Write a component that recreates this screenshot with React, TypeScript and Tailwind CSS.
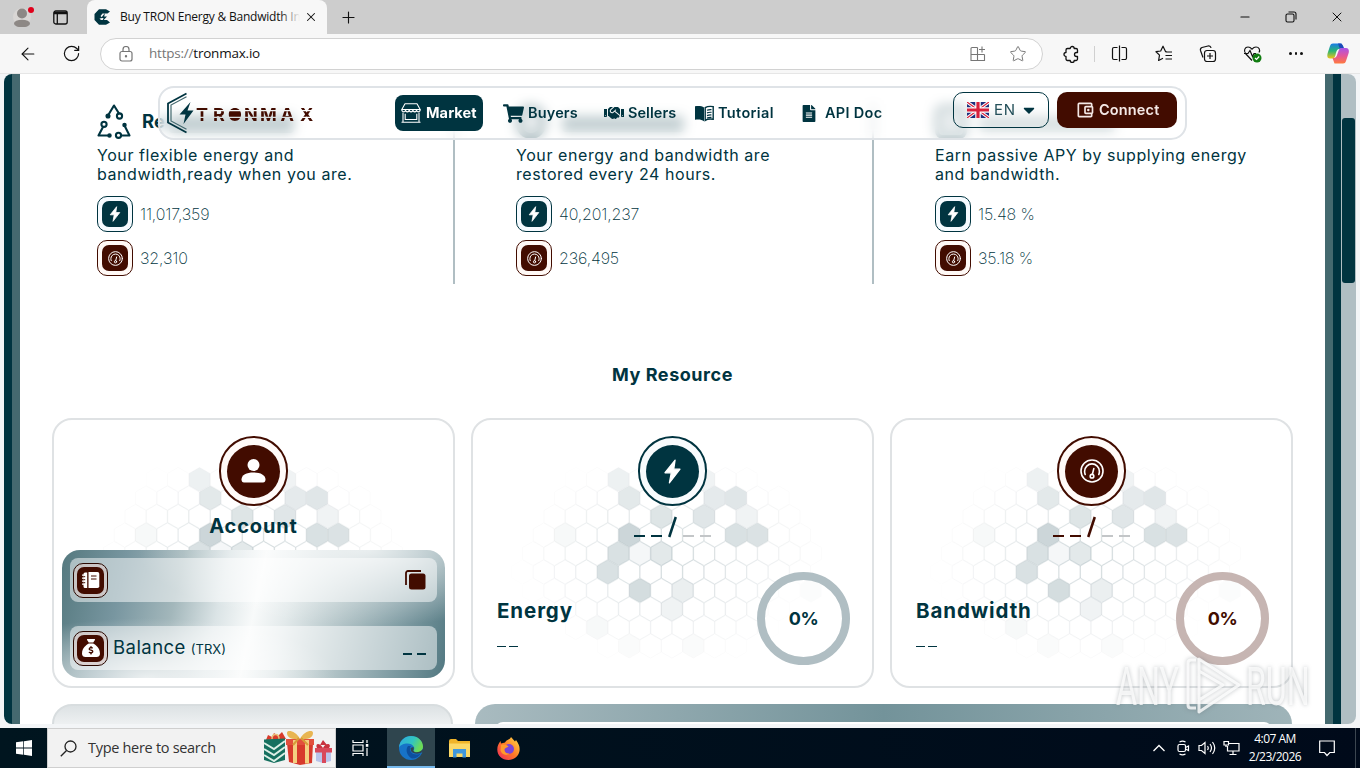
import type { ReactNode } from "react";
import { ArrowLeft, Minus, Plus, RotateCw, Star, X } from "lucide-react";
import { FaCaretDown, FaFileAlt, FaHandshake, FaShoppingCart } from "react-icons/fa";
import { FaSackDollar } from "react-icons/fa6";
import { MdOutlineAccountBalanceWallet } from "react-icons/md";

const hexFills: Record<string, number> = {
  "0-6": 0.07,
  "0-10": 0.06,
  "1-6": 0.11,
  "1-10": 0.1,
  "1-11": 0.12,
  "2-8": 0.13,
  "2-10": 0.12,
  "2-12": 0.06,
  "3-6": 0.2,
  "3-11": 0.15,
  "3-12": 0.14,
  "3-3": 0.03,
  "4-6": 0.15,
  "4-7": 0.04,
  "4-8": 0.11,
  "5-5": 0.15,
  "6-7": 0.17,
  "6-9": 0.08,
  "6-15": 0.04,
  "7-8": 0.06,
  "8-5": 0.03,
  "9-6": 0.02,
  "9-9": 0.02,
};

function HexPattern() {
  const cells: ReactNode[] = [];
  for (let row = 0; row < 10; row++) {
    for (let col = 1; col < 17; col++) {
      const cx = (row % 2 ? 27.3 : 16.5) + col * 21.7;
      const cy = 60.3 + row * 18.8;
      const d = Math.hypot((cx - 200) / 165, (cy - 140) / 112);
      const line = Math.max(0, 0.13 * (1 - d));
      const key = `${row}-${col}`;
      const points = [
        [0, -12.2],
        [10.6, -6.1],
        [10.6, 6.1],
        [0, 12.2],
        [-10.6, 6.1],
        [-10.6, -6.1],
      ]
        .map(([x, y]) => `${(cx + x).toFixed(1)},${(cy + y).toFixed(1)}`)
        .join(" ");
      cells.push(
        <polygon
          key={key}
          points={points}
          fill="#003440"
          fillOpacity={hexFills[key] ?? 0}
          stroke="#003440"
          strokeOpacity={line}
          strokeWidth="1"
        />
      );
    }
  }
  return (
    <svg className="absolute inset-0 h-full w-full" viewBox="0 0 403 270">
      {cells}
    </svg>
  );
}

function Bolt({ className }: { className: string }) {
  return (
    <svg className={className} viewBox="0 0 24 24" fill="currentColor">
      <path
        d="M14.500 1 4.800 13.200h6L9 23 19.200 9.800h-6z"
        stroke="currentColor"
        strokeWidth="1.200"
        strokeLinejoin="round"
      />
    </svg>
  );
}

function Gauge({ className }: { className: string }) {
  return (
    <svg
      className={className}
      viewBox="0 0 24 24"
      fill="none"
      stroke="currentColor"
      strokeWidth="1.600"
      strokeLinecap="round"
    >
      <circle cx="12" cy="12" r="11" />
      <path d="M5.200 15.500a7.600 7.600 0 0 1-.6-3.200 7.400 7.400 0 0 1 14.800 0 7.600 7.600 0 0 1-.6 3.200" />
      <circle cx="12" cy="17.200" r="1.800" />
      <path d="m12.400 15.200 1.400-5.600" />
    </svg>
  );
}

function Person({ className }: { className: string }) {
  return (
    <svg className={className} viewBox="0 0 24 24" fill="currentColor">
      <circle cx="12" cy="6" r="6" />
      <path d="M0 20.500c0-4.500 5-7 12-7s12 2.500 12 7c0 2-.9 3-2.500 3h-19C.9 23.500 0 22.500 0 20.500z" />
    </svg>
  );
}

function Notebook() {
  return (
    <svg className="h-[18px] w-[18px]" viewBox="0 0 18 18">
      <path d="M3 1.500h2.200v15.500H3a1.500 1.500 0 0 1-1.500-1.500v-12.500A1.500 1.500 0 0 1 3 1.500z" fill="#fff" />
      <path d="M6.500 1h9A1.800 1.800 0 0 1 17.300 2.800v12.400a1.800 1.800 0 0 1-1.800 1.800h-9z" fill="#fff" />
      <path d="M0 4.200h3.500M0 7.200h3.500M0 10.200h3.500M0 13.200h3.500" stroke="#fff" strokeWidth="1.300" />
      <path d="M1.500 5.700h1.700M1.500 8.700h1.700M1.500 11.700h1.700M9 5h5.500M9 8h5.500" stroke="#420c00" strokeWidth="1" />
    </svg>
  );
}

function Store() {
  return (
    <svg
      className="h-5 w-5"
      viewBox="0 0 20 20"
      fill="none"
      stroke="currentColor"
      strokeWidth="1.100"
      strokeLinejoin="round"
    >
      <path d="M4 .8h12l3.200 5.700H.8z" />
      <path d="M.8 6.500c0 3 3.700 3 3.700.3 0 2.700 3.700 2.700 3.700 0 0 2.700 3.700 2.700 3.700 0 0 2.700 3.700 2.700 3.700 0 0 2.700 3.600 2.700 3.600-.3" />
      <path d="M2 9.500v9.700h16V9.500M4.200 10.800v5.700h11.600v-5.700M.5 19.200h19" />
    </svg>
  );
}

function OpenBook() {
  return (
    <svg className="h-[17px] w-[19px]" viewBox="0 0 19 17">
      <path d="M9 2.400C6.700.8 3.600.6 0 1.200v13.600c3.600-.6 6.700-.3 9 1.400z" fill="#003440" />
      <path
        d="M10.200 2.700c2-1.300 4.800-1.600 8-1.100v12.700c-3.200-.5-6-.2-8 1.100z"
        fill="none"
        stroke="#003440"
        strokeWidth="1.400"
      />
      <path
        d="M12 5.200q2-.8 4.500-.6M12 7.900q2-.8 4.500-.6M12 10.600q2-.8 4.500-.6M12 13q2-.8 4.500-.6"
        fill="none"
        stroke="#003440"
        strokeWidth="1.200"
      />
    </svg>
  );
}

function RecycleNodes() {
  return (
    <svg
      className="h-[35px] w-[34px] shrink-0"
      viewBox="0 0 34 35"
      fill="none"
      stroke="#003440"
      strokeWidth="2.100"
      strokeLinecap="round"
      strokeLinejoin="round"
    >
      <path d="M11 11.500 17 1.500l5 8" />
      <circle cx="11" cy="12" r="1.500" fill="#003440" />
      <circle cx="22.500" cy="12" r="2.600" />
      <path d="M6 23 1.500 31.500H12" />
      <circle cx="7" cy="20.300" r="2.600" />
      <circle cx="12.500" cy="31.500" r="1.200" fill="#003440" />
      <path d="M28 22.500 32.500 31.500H24.500" />
      <circle cx="27.500" cy="21" r="1.200" fill="#003440" />
      <circle cx="21.500" cy="31.300" r="2.600" />
    </svg>
  );
}

function BrandLogo() {
  return (
    <svg className="h-[42px] w-[150px]" viewBox="0 0 150 42">
      <defs>
        <mask id="slices">
          <path d="M0 0h150v42H0z" fill="#fff" />
          <path d="M29 18.700h121M29 25.300h121" stroke="#000" strokeWidth="1.300" />
        </mask>
      </defs>
      <path d="M20.500 1.500 2 11.500v19l18.500 10" fill="none" stroke="#003440" strokeWidth="1.800" />
      <path d="M20.500 4.800 5 13v16l15.500 8.300" fill="none" stroke="#44696f" strokeWidth="1.200" />
      <path d="M24.500 10 13.500 22.500h6L17.500 32 27.500 18.500h-6z" fill="#003440" />
      <g mask="url(#slices)" fill="#420c00">
        <text
          x="30 47 62 78 94 114.500 134"
          y="28.500"
          fontFamily="Inter, sans-serif"
          fontWeight="700"
          fontSize="18"
        >
          TRONMAX
        </text>
        <circle cx="68.800" cy="22" r="5.500" />
      </g>
    </svg>
  );
}

function UkFlag() {
  return (
    <svg className="h-4 w-[22px]" viewBox="0 0 22 16">
      <path d="M0 0h22v16H0z" fill="#1d2f7c" />
      <path d="m0 0 22 16M22 0 0 16" stroke="#fff" strokeWidth="3.200" />
      <path d="m0 0 22 16M22 0 0 16" stroke="#d8213c" strokeWidth="1.200" />
      <path d="M11 0v16M0 8h22" stroke="#fff" strokeWidth="5.500" />
      <path d="M11 0v16M0 8h22" stroke="#d8213c" strokeWidth="3.200" />
    </svg>
  );
}

function TabStrip() {
  return (
    <div className="flex h-[34px] shrink-0 items-center bg-[#cdcdcd] text-[#111]">
      <svg className="ml-[13px] h-5 w-[22px]" viewBox="0 0 22 20">
        <circle cx="9" cy="10" r="9" fill="#d9d6d4" />
        <circle cx="9" cy="6.500" r="5" fill="#8d8885" />
        <ellipse cx="9" cy="16.500" rx="8" ry="3.800" fill="#8d8885" />
        <circle cx="18" cy="3" r="3" fill="#e0001b" />
      </svg>
      <svg className="ml-[18px] h-[15px] w-[15px]" viewBox="0 0 15 15" fill="none" stroke="#111" strokeWidth="1.300">
        <rect x=".8" y="1" width="13.400" height="13" rx="2" />
        <path d="M1 3h13" strokeWidth="2.500" />
        <path d="M4.300 4v10" />
      </svg>
      <div className="ml-[19px] flex h-full w-[240px] items-center rounded-t-lg bg-[#f7f7f7] pl-[7px]">
        <svg className="h-4 w-[17px]" viewBox="0 0 17 16">
          <path d="M16 2.500 12 .3H5L.5 5v6L5 15.700h7l4-2.200-3-2.500H7L5.500 9.500l3-.5-2-2 2-2.500h5z" fill="#003440" />
          <path d="M11 4 7 9h2.500L8.300 12.500 13 7.500h-2.800z" fill="#003440" />
        </svg>
        <div className="relative ml-[9px] w-[180px] overflow-hidden font-['Open_Sans'] text-xs tracking-[-0.22px] whitespace-nowrap">
          Buy TRON Energy &amp; Bandwidth In
          <div className="absolute inset-y-0 right-0 w-5 bg-linear-to-r from-transparent to-[#f7f7f7]" />
        </div>
        <X className="ml-1 h-3.5 w-3.5" strokeWidth={1.8} />
      </div>
      <Plus className="ml-3 h-[19px] w-[19px]" strokeWidth={1.4} />
      <div className="flex-1" />
      <Minus className="h-3.5 w-3.5" strokeWidth={1.8} />
      <svg className="ml-[33px] h-3 w-3" viewBox="0 0 12 12" fill="none" stroke="#111" strokeWidth="1.100">
        <rect x="1" y="3" width="8" height="8" rx="1.500" />
        <path d="M3.500 1h5.500a2 2 0 0 1 2 2v5.500" />
      </svg>
      <X className="mr-[15px] ml-8 h-4 w-4" strokeWidth={1.5} />
    </div>
  );
}

function AddressBar() {
  return (
    <div className="flex h-10 shrink-0 items-center border-b border-[#e6e6e6] bg-[#f7f7f7] text-[#111]">
      <ArrowLeft className="ml-[18px] h-5 w-5" strokeWidth={1.3} />
      <RotateCw className="ml-6 h-[19px] w-[19px]" strokeWidth={1.5} />
      <div className="ml-[19px] flex h-8 w-[943px] items-center rounded-full border border-[#d2d2d2] bg-white text-[#767676]">
        <svg className="ml-[18px] h-4 w-[14px]" viewBox="0 0 14 16" fill="none" stroke="currentColor" strokeWidth="1.200">
          <rect x="1" y="5.500" width="12" height="9.500" rx="2" />
          <path d="M4 5.500V3.500a3 3 0 0 1 6 0v2" />
          <circle cx="7" cy="10.300" r=".6" fill="currentColor" />
        </svg>
        <div className="ml-4 font-['Open_Sans'] text-[13.5px] tracking-[-0.22px]">
          https://<span className="text-[#111]">tronmax.io</span>
        </div>
        <div className="flex-1" />
        <svg className="h-4 w-4" viewBox="0 0 16 16" fill="none" stroke="currentColor" strokeWidth="1.100">
          <path d="M7.500 1.500H2A1 1 0 0 0 1 2.500v12h13.500V8.500M1 8.500h13.500M7.500 1.500v13M12 .5v6M9 3.500h6" />
        </svg>
        <Star className="mr-[15px] ml-[23px] h-[18px] w-[18px]" strokeWidth={1.3} />
      </div>
      <svg className="ml-5 h-[18px] w-[17px]" viewBox="0 0 17 18" fill="none" stroke="#111" strokeWidth="1.300" strokeLinejoin="round">
        <path d="M4.500 3.500h2.700a2 2 0 1 1 4 0H13a1.500 1.500 0 0 1 1.500 1.500v2.500h-1a2 2 0 0 0 0 4h1V14a1.500 1.500 0 0 1-1.500 1.500h-1.800a2 2 0 0 1-4 0H4.500A1.500 1.500 0 0 1 3 14v-2.500a2 2 0 1 1 0-4V5a1.500 1.500 0 0 1 1.500-1.500z" />
      </svg>
      <div className="ml-3.5 h-4 w-px bg-[#d0d0d0]" />
      <svg className="ml-4 h-[17px] w-[17px]" viewBox="0 0 17 17" fill="none" stroke="#111" strokeWidth="1.200">
        <path d="M6.500 2.500H3A1.500 1.500 0 0 0 1.500 4v9A1.500 1.500 0 0 0 3 14.500h3.500M10.500 2.500H14A1.500 1.500 0 0 1 15.500 4v9a1.500 1.500 0 0 1-1.500 1.500h-3.500M8.500.5v16" />
      </svg>
      <svg className="ml-[27px] h-[18px] w-[18px]" viewBox="0 0 18 18" fill="none" stroke="#111" strokeWidth="1.200" strokeLinejoin="round">
        <path d="M11.500 6.500h-1L8 1.200 5.700 6 1 6.700l3.500 3.400-.9 5.400L8 13.300M10.500 7h6.500M10.500 10.500H17M10.500 14H17" />
      </svg>
      <svg className="ml-[26px] h-[18px] w-[18px]" viewBox="0 0 18 18" fill="none" stroke="#111" strokeWidth="1.200">
        <rect x="5.500" y="5.500" width="11" height="11" rx="2.500" />
        <path d="M4 12.500 1.500 5.500A2.500 2.500 0 0 1 3 2.500L9 1a2.500 2.500 0 0 1 3 2M11 8v6M8 11h6" />
      </svg>
      <svg className="ml-[26px] h-[18px] w-[19px]" viewBox="0 0 19 18" fill="none" stroke="#111" strokeWidth="1.200">
        <path d="m9 15.500-6.500-7C.3 5.500 2 2 5 2c2 0 3 1 4 2.200C10 3 11 2 13 2c3 0 4.500 3 3 5.500M1 8.500h4l2-3 2.500 6 1.500-3h2" />
        <circle cx="14" cy="13" r="4.500" fill="#107c10" stroke="none" />
        <path d="m12 13 1.500 1.500 2.700-3" stroke="#fff" />
      </svg>
      <div className="ml-[27px] flex gap-[3px]">
        <div className="h-[2.5px] w-[2.5px] rounded-full bg-[#111]" />
        <div className="h-[2.5px] w-[2.5px] rounded-full bg-[#111]" />
        <div className="h-[2.5px] w-[2.5px] rounded-full bg-[#111]" />
      </div>
      <svg className="ml-6 h-[21px] w-[22px]" viewBox="0 0 22 21">
        <defs>
          <linearGradient id="copA" x1="0" y1="0" x2="0" y2="1">
            <stop offset="0" stopColor="#1a7ce8" />
            <stop offset=".5" stopColor="#2bb673" />
            <stop offset="1" stopColor="#f2c318" />
          </linearGradient>
          <linearGradient id="copB" x1="0" y1="0" x2="0" y2="1">
            <stop offset="0" stopColor="#a854e8" />
            <stop offset=".5" stopColor="#e3569b" />
            <stop offset="1" stopColor="#ff7a3d" />
          </linearGradient>
        </defs>
        <path d="M6 .5h8.500l2 5.500h-4C10 6 9.500 8 8.500 12c-.7 2.500-1.500 3.500-3.500 3.500H3c-3 0-3-3-2.300-5.500L3 3C3.500 1.300 4.500.5 6 .5z" fill="url(#copA)" />
        <path d="M16 20.500H7.500L5.500 15c3 .5 4-1 4.700-3.500l1.300-3.500c.8-2.500 1.800-3 3.500-3h4c3 0 3.300 3 2.500 5.500L19 18c-.5 1.700-1.500 2.500-3 2.500z" fill="url(#copB)" />
        <path d="M13 .5c2.500 0 2.700 1.500 4 4.500h-4.500L11 .5z" fill="#1b4bb8" />
      </svg>
    </div>
  );
}

function NavItem({ icon, label, className }: { icon: ReactNode; label: string; className: string }) {
  return (
    <div className={`flex items-center text-[14.5px] font-semibold ${className}`}>
      {icon}
      <span>{label}</span>
    </div>
  );
}

function SiteHeader() {
  return (
    <header className="absolute top-3 left-[154px] z-10 flex h-[54px] w-[1029px] items-center rounded-[16px] border-2 border-[#dfe3e7] bg-white/40 pl-1.5 whitespace-nowrap backdrop-blur-[6px]">
      <div className="w-[229px]">
        <BrandLogo />
      </div>
      <div className="flex h-9 w-[88px] items-center gap-[5px] rounded-lg bg-[#003440] pl-1.5 text-[14.5px] font-bold tracking-[0.1px] text-white">
        <Store />
        Market
      </div>
      <NavItem className="ml-5 w-[101px] gap-1 tracking-[0.15px]" icon={<FaShoppingCart className="h-[19px] w-[21px]" />} label="Buyers" />
      <NavItem className="w-[91px] gap-1 tracking-[0.05px]" icon={<FaHandshake className="h-4 w-5" />} label="Sellers" />
      <NavItem className="w-[106px] gap-1 tracking-[0.35px]" icon={<OpenBook />} label="Tutorial" />
      <NavItem className="w-[152px] gap-2 tracking-[0.3px]" icon={<FaFileAlt className="h-[17px] w-4" />} label="API Doc" />
      <div className="-mt-1.5 flex h-9 w-24 items-center rounded-[10px] border border-[#003440] pl-[13px] text-[15px] tracking-[0.8px] text-[#24505a]">
        <UkFlag />
        <span className="ml-[5px]">EN</span>
        <FaCaretDown className="ml-[7px] h-[18px] w-3 text-[#003440]" />
      </div>
      <div className="-mt-1.5 ml-2 flex h-9 w-[120px] items-center gap-1 rounded-[10px] bg-[#420c00] pl-[18px] text-[14.5px] font-semibold tracking-[0.15px] text-[#f5e9e6]">
        <MdOutlineAccountBalanceWallet className="h-5 w-5" />
        Connect
      </div>
    </header>
  );
}

function IconBox({ dark, children }: { dark?: boolean; children: ReactNode }) {
  return (
    <div
      className={
        dark
          ? "flex h-9 w-9 items-center justify-center rounded-[10px] border border-[#420c00] bg-[#fff9f6]"
          : "flex h-9 w-9 items-center justify-center rounded-[10px] border border-[#003440] bg-[#f6fbff]"
      }
    >
      <div
        className={
          dark
            ? "flex h-[26px] w-[26px] items-center justify-center rounded-[7px] bg-[#420c00] text-white"
            : "flex h-[26px] w-[26px] items-center justify-center rounded-[7px] bg-[#003440] text-white"
        }
      >
        {children}
      </div>
    </div>
  );
}

type StatProps = {
  head: ReactNode;
  lines: string[];
  energy: string;
  bandwidth: string;
  last?: boolean;
};

function Stat({ head, lines, energy, bandwidth, last }: StatProps) {
  return (
    <div className={last ? "mt-[30px] h-[180px] pl-[45px]" : "mt-[30px] h-[180px] border-r-2 border-[#b0bec3] pl-[45px]"}>
      <div className="flex h-[35px] items-center">{head}</div>
      <div className="mt-[7px] text-[16px] leading-[19px] tracking-[0.57px] whitespace-nowrap">
        {lines.map((line) => (
          <div key={line}>{line}</div>
        ))}
      </div>
      <div className="mt-3 flex items-center gap-[7px] text-[16px] font-extralight tracking-[-0.15px]">
        <IconBox>
          <Bolt className="h-4 w-4" />
        </IconBox>
        {energy}
      </div>
      <div className="mt-2 flex items-center gap-[7px] text-[16px] font-extralight tracking-[-0.15px]">
        <IconBox dark>
          <Gauge className="h-[15px] w-[15px]" />
        </IconBox>
        {bandwidth}
      </div>
    </div>
  );
}

function Medal({ dark, children }: { dark?: boolean; children: ReactNode }) {
  return (
    <div
      className={
        dark
          ? "relative flex h-[70px] w-[69px] items-center justify-center rounded-full border-2 border-[#420c00] bg-[#fffaf8]"
          : "relative flex h-[70px] w-[69px] items-center justify-center rounded-full border-2 border-[#003440] bg-[#f8fbfd]"
      }
    >
      <div
        className={
          dark
            ? "flex h-[53px] w-[53px] items-center justify-center rounded-full bg-[#420c00] text-white"
            : "flex h-[53px] w-[53px] items-center justify-center rounded-full bg-[#003440] text-white"
        }
      >
        {children}
      </div>
    </div>
  );
}

function Card({ children }: { children: ReactNode }) {
  return (
    <div className="relative flex h-[270px] flex-col items-center rounded-[20px] border-2 border-[#dfe2e4] pt-4">
      <HexPattern />
      {children}
    </div>
  );
}

function RowIcon({ children }: { children: ReactNode }) {
  return (
    <div className="flex h-[35px] w-[35px] items-center justify-center rounded-[10px] border border-[#2b0800] bg-[#d8c4c1]/60">
      <div className="flex h-[27px] w-[27px] items-center justify-center rounded-[7px] bg-[#420c00] text-white">
        {children}
      </div>
    </div>
  );
}

function AccountCard() {
  return (
    <Card>
      <Medal dark>
        <Person className="h-6 w-[25px]" />
      </Medal>
      <div className="relative mt-[7px] text-[20px] leading-[26px] font-bold tracking-[0.85px]">Account</div>
      <div className="relative mt-[11px] flex h-32 w-[383px] flex-col gap-6 rounded-[18px] bg-[radial-gradient(ellipse_230px_75px_at_80%_0%,rgba(255,255,255,0.75)_0%,transparent_100%),radial-gradient(ellipse_190px_60px_at_22%_100%,rgba(255,255,255,0.8)_0%,transparent_100%),linear-gradient(102deg,#55797f_0%,#7896a0_16%,#a3b7bb_30%,#dbe4e6_41%,#f8fafa_50%,#e3eaeb_58%,#b9c9cc_70%,#829ea5_86%,#527881_100%)] p-2">
        <div className="flex h-11 items-center justify-between rounded-lg bg-white/50 pr-[11px] pl-[3px]">
          <RowIcon>
            <Notebook />
          </RowIcon>
          <svg className="h-5 w-[21px]" viewBox="0 0 21 20">
            <path d="M16 1H3a2 2 0 0 0-2 2v12" fill="none" stroke="#420c00" strokeWidth="1.800" />
            <rect x="4" y="3.500" width="16.500" height="16" rx="2.500" fill="#420c00" />
          </svg>
        </div>
        <div className="flex h-11 items-center rounded-lg bg-white/50 pr-[11px] pl-[3px]">
          <RowIcon>
            <FaSackDollar className="h-[18px] w-[18px]" />
          </RowIcon>
          <span className="ml-[5px] text-[18.5px] tracking-[0.45px]">Balance</span>
          <span className="mt-1 ml-[5px] text-[13px]">(TRX)</span>
          <div className="mt-3 ml-auto flex gap-[5px]">
            <div className="h-[1.5px] w-[9px] bg-[#003440]" />
            <div className="h-[1.5px] w-[9px] bg-[#003440]" />
          </div>
        </div>
      </div>
    </Card>
  );
}

function ResourceCard({ name, dark, icon }: { name: string; dark?: boolean; icon: ReactNode }) {
  const dash = dark ? "h-0.5 w-[11px] bg-[#420c00]" : "h-0.5 w-[11px] bg-[#003440]";
  return (
    <Card>
      <Medal dark={dark}>{icon}</Medal>
      <div className="relative mt-2.5 flex h-[22px] w-[78px] items-end gap-1.5 pb-px">
        <div className={dash} />
        <div className={dash} />
        <svg className="-mb-px h-[22px] w-[9px]" viewBox="0 0 9 22">
          <path d="M7.800 1 1.200 21" stroke={dark ? "#420c00" : "#003440"} strokeWidth="2.600" />
        </svg>
        <div className="h-0.5 w-[11px] bg-[#c3c6c8]" />
        <div className="h-0.5 w-[11px] bg-[#c3c6c8]" />
      </div>
      <div className="relative mt-[34px] flex w-full justify-between pr-[22px] pl-6">
        <div className="pt-[26px]">
          <div className="text-[20.5px] leading-[26px] font-bold tracking-[0.9px]">{name}</div>
          <div className="mt-[22px] flex gap-[3px]">
            <div className="h-px w-[9px] bg-[#003440]" />
            <div className="h-px w-[9px] bg-[#003440]" />
          </div>
        </div>
        <div
          className={
            dark
              ? "flex h-[93px] w-[93px] items-center justify-center rounded-full border-8 border-[#c6b5b2] bg-white/60 text-[18px] font-bold tracking-[-0.5px] text-[#420c00]"
              : "flex h-[93px] w-[93px] items-center justify-center rounded-full border-8 border-[#b0bec3] bg-white/60 text-[18px] font-bold tracking-[-0.5px]"
          }
        >
          0%
        </div>
      </div>
    </Card>
  );
}

function Watermark() {
  return (
    <svg
      className="absolute right-[43px] bottom-0 z-20 h-[74px] w-[200px] overflow-visible drop-shadow-[0_0_2px_rgba(90,100,105,0.5)]"
      viewBox="-2 -5 200 74"
    >
      <g fill="#fff" fillOpacity="0.75" fontFamily="Roboto, sans-serif" fontSize="54">
        <text transform="translate(1 50) scale(.63 1)" textLength="100" lengthAdjust="spacingAndGlyphs">
          ANY
        </text>
        <text transform="translate(131 50) scale(.63 1)" textLength="101" lengthAdjust="spacingAndGlyphs">
          RUN
        </text>
      </g>
      <path
        d="M81 5h-5q-3 0-3 3v42q0 3 3 3h5M84 44V4l40 26-40 27V45l24-15-24-14"
        fill="none"
        stroke="#fff"
        strokeOpacity="0.8"
        strokeWidth="3"
        strokeLinejoin="round"
      />
    </svg>
  );
}

function Gifts() {
  return (
    <svg className="h-9 w-[70px]" viewBox="0 0 70 36">
      <path d="M3 10 5 5l4 2 2-4 4 3 4-4 4 7z" fill="#d93a2b" />
      <path d="M9 9c0-6 7-6 7 0" fill="none" stroke="#e9c07a" strokeWidth="1.500" />
      <path d="M1 9.500 22 8.500V30L11 33 1 30z" fill="#16705f" />
      <path d="m1 13 10 6 11-8M1 19l10 6 11-8M1 25l10 6 11-8" fill="none" stroke="#dcefe6" strokeWidth="2" />
      <path d="M24 13h26l-1 20-12 2-11-3z" fill="#d73a2c" />
      <path d="M23 9h28v6H23z" fill="#e2503d" />
      <path d="M30 10h4v23h-4zM42 10h4v23.500h-4z" fill="#f4cf80" />
      <path d="M37 9C33 1 24-1 24 3s4 7 13 6c9 1 13-2 13-6S41 1 37 9z" fill="#e8b552" />
      <path d="m36 8-6 7M38 8l7 7" stroke="#d79b38" strokeWidth="2" />
      <path d="M53 20h15v11l-8 2-7-2z" fill="#b9c3ea" />
      <path d="M52 18h17v4.500H52zM59 20h4v13h-4z" fill="#d9485a" />
      <path d="M60 18c-5-7-8-3-6 0zM60 18c4-7 9-3 6 0zM57 15l3-5 4 5z" fill="#c8323e" />
    </svg>
  );
}

function Taskbar() {
  return (
    <div className="flex h-10 shrink-0 items-center bg-linear-to-r from-[#00151f] to-[#000a1a] font-['Open_Sans'] text-white">
      <svg className="mr-[15px] ml-4 h-4 w-4" viewBox="0 0 16 16" fill="#fff">
        <path d="M0 2.300 7.300 1.300v6.300H0zM8 1.200 16 0v7.600H8zM0 8.400h7.300v6.300L0 13.700zM8 8.400h8V16l-8-1.200z" />
      </svg>
      <div className="flex h-10 w-[289px] items-center border border-[#cfcfcf] bg-[#f2f2f2] text-[#333]">
        <svg className="ml-3 h-[17px] w-[17px]" viewBox="0 0 17 17" fill="none" stroke="#222" strokeWidth="1.300">
          <circle cx="10.500" cy="6.500" r="5.500" />
          <path d="M6.500 10.500.8 16.300" />
        </svg>
        <div className="ml-[11px] w-[175px] text-[14.5px] tracking-[-0.3px]">Type here to search</div>
        <Gifts />
      </div>
      <svg className="ml-4 h-4 w-[17px]" viewBox="0 0 17 16" fill="none" stroke="#fff" strokeWidth="1.200">
        <path d="M1 0v2.500h10V0M1 16v-2.500h10V16M1 5h10v6H1zM15 0v3M15 8v8" />
        <path d="M13.800 4h2.500v2.800h-2.500z" fill="#fff" stroke="none" />
      </svg>
      <div className="ml-[18px] flex h-10 w-12 items-center justify-center border-b-2 border-[#76b9ed] bg-[#2f454e] pt-0.5">
        <svg className="h-6 w-6" viewBox="0 0 24 24">
          <defs>
            <linearGradient id="edgeTop" x1="0" y1="0" x2="1" y2=".4">
              <stop offset="0" stopColor="#2fa8e0" />
              <stop offset=".6" stopColor="#32c5c0" />
              <stop offset="1" stopColor="#6ddb55" />
            </linearGradient>
          </defs>
          <circle cx="12" cy="12" r="12" fill="#1773c8" />
          <path d="M0 11.500C.5 4.500 6 0 12 0c7 0 12 5 12 10.500 0 4-3 6-6 6-2.500 0-4-1-3.500-2 1-1.500.8-2.500.5-3.500C13.500 8 10 7 7 7.500 3.500 8 1 9.500 0 11.500z" fill="url(#edgeTop)" />
          <path d="M9 10c-3 4-1 10 4 12.500 4 0 7-2 9-5-3 1.500-8 1.500-10-1.500-1.500-2-1.500-4.500 0-6z" fill="#0d4f9e" />
          <path d="M24 15.500c-4 3.500-10 2.500-12-.5l-.5-3 3-1c.5 1.500 0 3-.2 3.700 1 2 6 2.500 9.700-1.700z" fill="#2f454e" />
        </svg>
      </div>
      <svg className="ml-3.5 h-[19px] w-[21px]" viewBox="0 0 21 19">
        <path d="M0 2q0-2 2-2h5l2 2h12v16H0z" fill="#f0b429" />
        <path d="M0 4.500h21V18H0z" fill="#fbd867" />
        <path d="M4 10h13v8.500h-3.500v-4h-6v4H4z" fill="#3f97dd" />
      </svg>
      <svg className="ml-[27px] h-[23px] w-[23px]" viewBox="0 0 23 23">
        <defs>
          <linearGradient id="fox" x1="1" y1="0" x2="0" y2="1">
            <stop offset="0" stopColor="#ffe14a" />
            <stop offset=".5" stopColor="#ff7a26" />
            <stop offset="1" stopColor="#f0245e" />
          </linearGradient>
        </defs>
        <path d="M14 0c1.500 2 3 3 4 4.500l1-1.500c3 4 4 7 3.500 11-1 5.500-5.500 9-11 9C5 23 .3 18.500.3 12.500.3 9 1.500 6.500 3.500 4L4 6.500 8 5.500C10 2 13 3 14 0z" fill="url(#fox)" />
        <circle cx="12" cy="12" r="5" fill="#7a44d8" />
        <path d="M4 8c3-1 6 0 7.500 1.500-1.500 1.500-4 1-4 3.500 0 2 2 4 5 3.500-3 3-8 1-9-3z" fill="#ff9a2c" />
      </svg>
      <div className="flex-1" />
      <svg className="h-2 w-3" viewBox="0 0 12 8" fill="none" stroke="#fff" strokeWidth="1.300">
        <path d="m.5 7 5.500-5.500L11.500 7" />
      </svg>
      <svg className="ml-3 h-4 w-[13px]" viewBox="0 0 13 16" fill="none" stroke="#fff" strokeWidth="1.200">
        <rect x="1" y="4.500" width="7.500" height="7" rx="1.500" />
        <path d="m8.500 7.500 3-1.500v4.500l-3-1.500M2.500 2q3-1.800 6 0M2.500 14q3 1.800 6 0" />
      </svg>
      <svg className="ml-2 h-4 w-[18px]" viewBox="0 0 18 16" fill="none" stroke="#fff" strokeWidth="1.200">
        <path d="M1 5.500h2.500L7 2.500v11L3.500 10.500H1zM9.500 6q1.500 2 0 4M12 4q3 4 0 8M14.500 2q4.500 6 0 12" />
      </svg>
      <svg className="ml-[7px] h-4 w-[17px]" viewBox="0 0 17 16" fill="none" stroke="#fff" strokeWidth="1.200">
        <path d="M6 3.500h10v7.500H4.500V6M10 11v3.500M6.500 14.500h7M1 1.500h4.500v3.500H1zM3 5v2" />
      </svg>
      <div className="ml-2 w-[54px] text-center text-[12px] leading-[18px] tracking-[-0.5px] whitespace-nowrap">
        <div>4:07 AM</div>
        <div>2/23/2026</div>
      </div>
      <svg className="ml-[17px] h-[17px] w-4" viewBox="0 0 16 17" fill="none" stroke="#fff" strokeWidth="1.200">
        <path d="M.7 1h14.600v11.500h-4.500L8 15.500l-2.500-3H.7z" />
      </svg>
      <div className="mr-1 ml-5 h-10 w-px bg-[#3c4650]" />
    </div>
  );
}

export default function App() {
  return (
    <div className="flex h-[768px] w-[1360px] flex-col overflow-hidden bg-[#f3f5f7]">
      <TabStrip />
      <AddressBar />
      <div className="relative mx-1 flex h-[650px] shrink-0 overflow-hidden rounded-lg bg-white font-['Inter'] text-[#003440]">
        <div className="w-2 shrink-0 bg-[#003440]" />
        <div className="w-2 shrink-0 bg-[#44696f]" />
        <SiteHeader />
        <main className="flex w-[1305px] flex-col overflow-hidden pl-8">
          <div className="grid w-[1241px] grid-cols-3 gap-4">
            <Stat
              head={
                <>
                  <RecycleNodes />
                  <span className="ml-[11px] text-[18.5px] font-bold">Re</span>
                  <div className="mt-1 ml-1 h-[18px] w-[125px] rounded bg-[#003440]/40" />
                </>
              }
              lines={["Your flexible energy and", "bandwidth,ready when you are."]}
              energy="11,017,359"
              bandwidth="32,310"
            />
            <Stat
              head={
                <>
                  <div className="h-[34px] w-[30px] rounded-full border-[6px] border-[#003440]/50 bg-[#003440]/10" />
                  <div className="mt-1 ml-4 h-4 w-[122px] rounded bg-[#003440]/40" />
                </>
              }
              lines={["Your energy and bandwidth are", "restored every 24 hours."]}
              energy="40,201,237"
              bandwidth="236,495"
            />
            <Stat
              last
              head={
                <>
                  <div className="h-[34px] w-[32px] rounded-lg border-4 border-[#003440]/40 bg-[#003440]/15" />
                  <div className="mt-1 ml-3 h-4 w-[136px] rounded bg-[#003440]/25" />
                </>
              }
              lines={["Earn passive APY by supplying energy", "and bandwidth."]}
              energy="15.48 %"
              bandwidth="35.18 %"
            />
          </div>
          <h2 className="mt-[79px] w-[1241px] text-center text-[18px] leading-6 font-bold tracking-[0.55px]">My Resource</h2>
          <div className="mt-[31px] grid w-[1241px] grid-cols-3 gap-4">
            <AccountCard />
            <ResourceCard name="Energy" icon={<Bolt className="h-[25px] w-[25px]" />} />
            <ResourceCard name="Bandwidth" dark icon={<Gauge className="h-6 w-6" />} />
          </div>
          <div className="mt-4 flex gap-[22px]">
            <div className="h-20 w-[401px] shrink-0 rounded-[20px] border-2 border-[#d8dddf] bg-linear-to-b from-[#dde2e4] to-[#f2f4f5] to-30%" />
            <div className="h-20 w-[817px] shrink-0 rounded-[20px] bg-linear-to-r from-[#a9bbc0] via-[#73939a] to-[#9fb4b9] px-5 pt-[18px]">
              <div className="h-10 rounded-t-lg bg-white" />
            </div>
          </div>
        </main>
        <div className="w-2 shrink-0 bg-[#44696f]" />
        <div className="w-2 shrink-0 bg-[#003440]" />
        <div className="w-[15px] shrink-0 bg-[#b0bec3] px-px pt-11">
          <div className="h-[165px] rounded-[3px] bg-[#003440]" />
        </div>
        <Watermark />
      </div>
      <div className="h-1 shrink-0" />
      <Taskbar />
    </div>
  );
}
